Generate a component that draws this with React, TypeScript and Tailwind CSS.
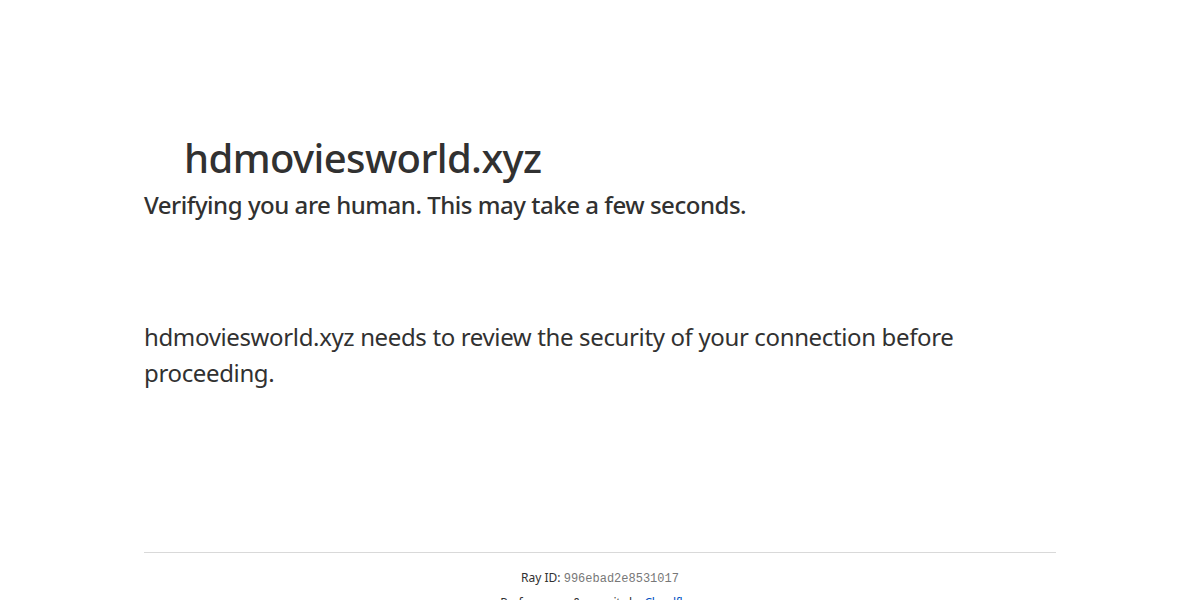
export default function App() {
  const font = { fontFamily: '"Noto Sans", "Open Sans", sans-serif' };
  return (
    <div className="min-h-[600px] bg-white text-[#313131] overflow-hidden" style={font}>
      <div className="mx-auto mt-32 w-full max-w-[960px] px-6">
        <h1 className="pl-10 text-[40px] leading-[60px] font-medium tracking-[-0.6px]">hdmoviesworld.xyz</h1>
        <h2 className="-mt-[1px] mb-[1px] text-[24px] leading-[36px] font-medium tracking-[-0.47px]">Verifying you are human. This may take a few seconds.</h2>
        <div className="h-[95px]" />
        <div className="text-[24px] leading-[36px] tracking-[-0.36px] font-normal">
          hdmoviesworld.xyz needs to review the security of your connection before proceeding.
        </div>
      </div>
      <div className="mx-auto mt-[161px] w-full max-w-[960px] px-6">
        <div className="border-t border-[#d9d9d9] pt-4 text-center text-[12px] leading-[18px]">
          <div>
            Ray ID: <code className="text-[#777777]" style={{ fontFamily: '"Liberation Mono", monospace', fontSize: '12px' }}>996ebad2e8531017</code>
          </div>
          <div className="mt-[6px] tracking-[-0.3px]">
            Performance &amp; security by <span className="text-[#0051c3]">Cloudflare</span>
          </div>
        </div>
      </div>
    </div>
  );
}
